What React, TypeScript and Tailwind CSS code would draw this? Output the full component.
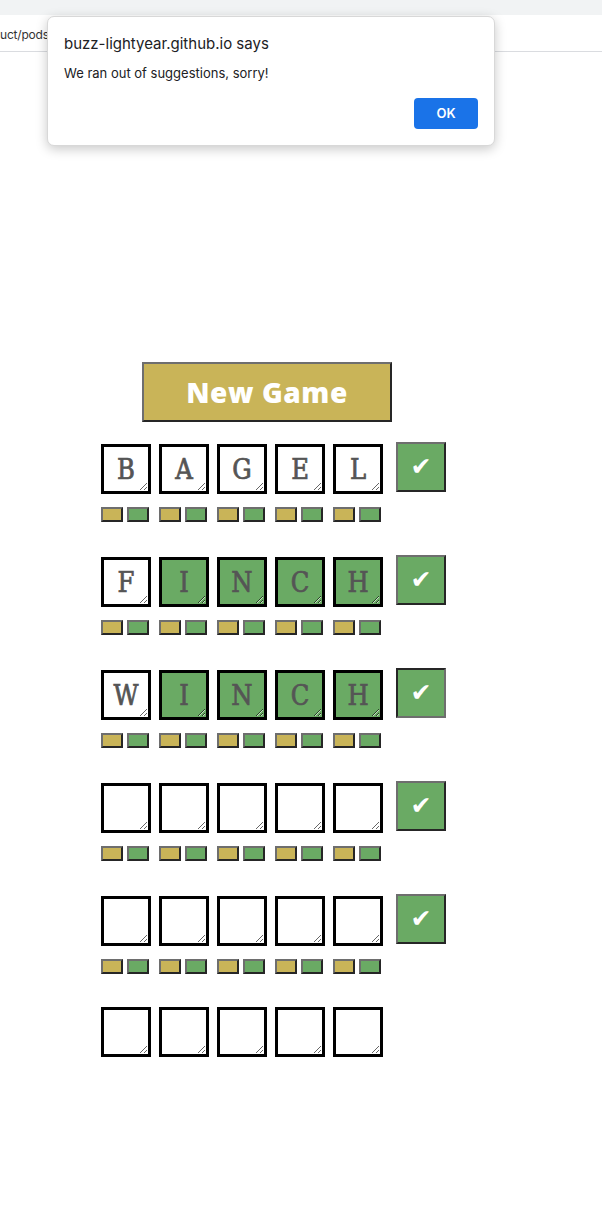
import React from "react";

const GREEN = "bg-[#6aaa64]";

type Row = { letters: string[]; greens: boolean[]; check: boolean; pressed?: boolean };

const rows: Row[] = [
  { letters: ["B", "A", "G", "E", "L"], greens: [false, false, false, false, false], check: true },
  { letters: ["F", "I", "N", "C", "H"], greens: [false, true, true, true, true], check: true },
  { letters: ["W", "I", "N", "C", "H"], greens: [false, true, true, true, true], check: true, pressed: true },
  { letters: ["", "", "", "", ""], greens: [false, false, false, false, false], check: true },
  { letters: ["", "", "", "", ""], greens: [false, false, false, false, false], check: true },
  { letters: ["", "", "", "", ""], greens: [false, false, false, false, false], check: false },
];

const Hint = ({ green }: { green?: boolean }) => (
  <button
    className={`w-[22px] h-[15px] border-2 border-t-[#6e6e6e] border-l-[#6e6e6e] border-b-[#262626] border-r-[#262626] ${
      green ? GREEN : "bg-[#c9b458]"
    }`}
  />
);

const Tile = ({ letter, green }: { letter: string; green: boolean }) => (
  <textarea
    readOnly
    value={letter}
    className={`w-[50px] h-[50px] border-[3px] border-black overflow-hidden text-center pt-[5px] text-[27px] leading-[36px] text-[#555] [-webkit-text-stroke:0.7px_#555] ${
      green ? GREEN : "bg-white"
    }`}
    style={{ fontFamily: '"DejaVu Serif", serif', fontStretch: "condensed" }}
  />
);

export default function App() {
  return (
    <div className="relative w-[602px] h-[1205px] bg-white overflow-hidden" style={{ fontFamily: "Inter, sans-serif" }}>
      {/* browser chrome */}
      <div className="h-[15px] bg-[#f1f3f4]" />
      <div className="h-[37px] border-b border-[#dadce0] flex items-center">
        <span className="text-[12px] text-[#333] mt-[3px] tracking-[-0.2px]">uct/pods</span>
      </div>

      {/* game */}
      <div className="pl-[142px] pt-[310px]">
        <button
          className="w-[250px] h-[60px] bg-[#c9b458] border-2 border-t-[#6e6e6e] border-l-[#6e6e6e] border-b-[#262626] border-r-[#262626] text-white text-[28px] font-black tracking-[0.6px]"
          style={{ fontFamily: '"Open Sans", Inter, sans-serif' }}
        >
          New Game
        </button>
      </div>

      <div className="pl-[101px] pt-[20px] flex flex-col gap-[33px]">
        {rows.map((row, i) => (
          <div key={i} className="flex flex-col">
            <div className="flex items-start">
              <div className={`flex gap-[8px] ${row.check ? "mt-[2px]" : "mt-0"}`}>
                {row.letters.map((l, j) => (
                  <Tile key={j} letter={l} green={row.greens[j]} />
                ))}
              </div>
              {row.check && (
                <button
                  className={`ml-[13px] w-[50px] h-[50px] ${GREEN} border-2 text-white text-[25px] flex items-center justify-center ${
                    row.pressed
                      ? "border-t-[#262626] border-l-[#262626] border-b-[#6e6e6e] border-r-[#6e6e6e]"
                      : "border-t-[#6e6e6e] border-l-[#6e6e6e] border-b-[#262626] border-r-[#262626]"
                  }`}
                  style={{ fontFamily: '"DejaVu Sans", sans-serif' }}
                >
                  ✔
                </button>
              )}
            </div>
            {row.check && (
              <div className="flex gap-[10px] mt-[13px]">
                {[0, 1, 2, 3, 4].map((k) => (
                  <div key={k} className="flex gap-[4px]">
                    <Hint />
                    <Hint green />
                  </div>
                ))}
              </div>
            )}
          </div>
        ))}
      </div>

      {/* alert dialog */}
      <div className="absolute left-[47px] top-[16px] w-[448px] h-[130px] bg-white rounded-[7px] border border-[#d8d8d8] shadow-[0_3px_12px_rgba(0,0,0,0.22)] px-[16px] pt-[17px]">
        <div className="text-[15px] text-[#202124] leading-[20px]">buzz-lightyear.github.io says</div>
        <div className="text-[13px] text-[#202124] mt-[10px] leading-[18px]">We ran out of suggestions, sorry!</div>
        <div className="flex justify-end mt-[16px]">
          <button className="w-[64px] h-[31px] rounded-[4px] bg-[#1a73e8] text-white text-[13px] font-semibold">OK</button>
        </div>
      </div>
    </div>
  );
}
